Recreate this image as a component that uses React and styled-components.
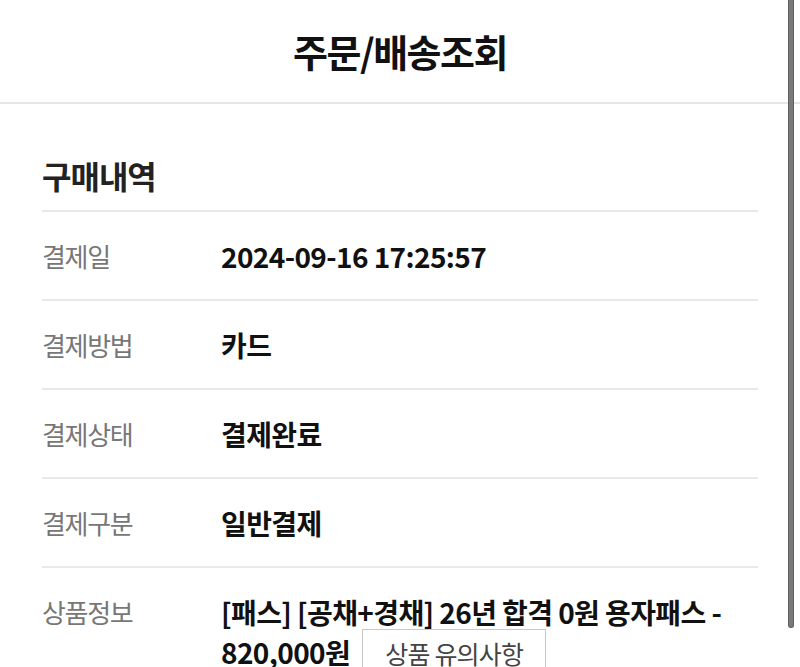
import styled, {createGlobalStyle} from "styled-components";

const GlobalStyle = createGlobalStyle`
  html, body {
    margin: 0;
    padding: 0;
    background: #fff;
    overflow: hidden;
  }
  body {
    font-family: "Noto Sans CJK KR", "Noto Sans", sans-serif;
    color: #111;
  }
  * {
    box-sizing: border-box;
  }
`;

const rows = [
  {label: "결제일", value: "2024-09-16 17:25:57"},
  {label: "결제방법", value: "카드"},
  {label: "결제상태", value: "결제완료"},
  {label: "결제구분", value: "일반결제"},
];

const App = () => {
  return (
    <Page>
      <GlobalStyle/>
      <Header>
        <Title>주문/배송조회</Title>
      </Header>
      <Section>
        <SectionTitle>구매내역</SectionTitle>
        <List>
          {rows.map((row) => (
            <Row key={row.label}>
              <Label>{row.label}</Label>
              <Value>{row.value}</Value>
            </Row>
          ))}
          <Row>
            <Label>상품정보</Label>
            <Value>
              [패스] [공채+경채] 26년 합격 0원 용자패스 - 820,000원
              <NoticeButton type="button">상품 유의사항</NoticeButton>
            </Value>
          </Row>
        </List>
      </Section>
      <ScrollThumb/>
    </Page>
  )
}

export default App;

const Page = styled.div`
  position: relative;
  width: 800px;
  min-height: 667px;
`;

const Header = styled.header`
  height: 104px;
  display: flex;
  align-items: center;
  justify-content: center;
  border-bottom: 2px solid #e6e6e6;
`;

const Title = styled.h1`
  margin: 0;
  font-size: 38px;
  font-weight: 700;
  letter-spacing: -1.5px;
  color: #111;
  line-height: 1;
`;

const Section = styled.section`
  padding: 50px 42px 0;
`;

const SectionTitle = styled.h2`
  margin: 0;
  padding-bottom: 14px;
  font-size: 32px;
  font-weight: 700;
  line-height: 42px;
  letter-spacing: -1px;
  color: #222;
`;

const List = styled.ul`
  margin: 0;
  padding: 0;
  list-style: none;
`;

const Row = styled.li`
  display: flex;
  align-items: flex-start;
  padding: 24px 0 23px;
  border-top: 2px solid #e9e9e9;
  line-height: 40px;
`;

const Label = styled.span`
  flex: 0 0 179px;
  font-size: 26px;
  font-weight: 400;
  color: #777;
  letter-spacing: -1.3px;
`;

const Value = styled.div`
  flex: 1;
  font-size: 28px;
  font-weight: 700;
  color: #111;
  letter-spacing: -0.6px;
`;

const NoticeButton = styled.button`
  display: inline-block;
  margin: -3px 0 0 12px;
  height: 48px;
  padding: 0 22px;
  vertical-align: top;
  background: #fff;
  border: 1px solid #c9c9c9;
  font-family: "Noto Sans CJK KR", "Noto Sans", sans-serif;
  font-size: 25px;
  font-weight: 400;
  color: #444;
  letter-spacing: -0.8px;
  line-height: 46px;
`;

const ScrollThumb = styled.div`
  position: absolute;
  top: 0;
  right: 6px;
  width: 6px;
  height: 628px;
  background: #7a7a7a;
  border: 1px solid #5e5e5e;
  border-top: none;
  border-radius: 0 0 3px 3px;
`;
